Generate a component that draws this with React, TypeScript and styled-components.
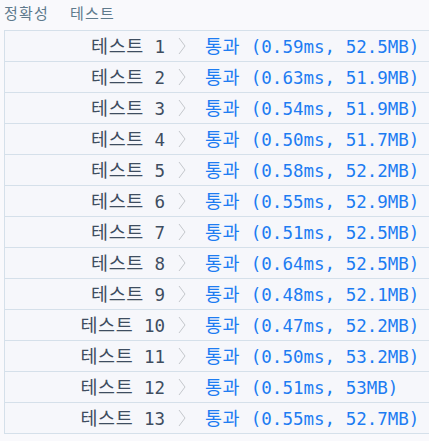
import styled, { createGlobalStyle } from 'styled-components';

const results = [
  { time: '0.59ms', mem: '52.5MB' },
  { time: '0.63ms', mem: '51.9MB' },
  { time: '0.54ms', mem: '51.9MB' },
  { time: '0.50ms', mem: '51.7MB' },
  { time: '0.58ms', mem: '52.2MB' },
  { time: '0.55ms', mem: '52.9MB' },
  { time: '0.51ms', mem: '52.5MB' },
  { time: '0.64ms', mem: '52.5MB' },
  { time: '0.48ms', mem: '52.1MB' },
  { time: '0.47ms', mem: '52.2MB' },
  { time: '0.50ms', mem: '53.2MB' },
  { time: '0.51ms', mem: '53MB' },
  { time: '0.55ms', mem: '52.7MB' },
];

export default function App() {
  return (
    <>
      <GlobalStyle />
      <Page>
        <Heading>
          <span>정확성</span>
          <span>테스트</span>
        </Heading>
        <Table>
          {results.map((r, i) => (
            <Row key={i}>
              <Label>
                <Hangul>테스트</Hangul> {i + 1}
              </Label>
              <Chevron width="8" height="18" viewBox="0 0 8 18">
                <polyline points="1,1 7,9 1,17" fill="none" stroke="#c4c7cc" strokeWidth="1" />
              </Chevron>
              <Result>
                <Hangul>통과</Hangul> ({r.time}, {r.mem})
              </Result>
            </Row>
          ))}
        </Table>
      </Page>
    </>
  );
}

const GlobalStyle = createGlobalStyle`
  body {
    margin: 0;
    background: #f9f9fc;
    font-family: "DejaVu Sans Mono", "Noto Sans CJK KR", monospace;
  }
`;

const Page = styled.div`
  width: 429px;
  height: 441px;
  overflow: hidden;
`;

const Heading = styled.div`
  display: flex;
  gap: 21px;
  height: 30px;
  padding-left: 4px;
  font-family: "Noto Sans CJK KR", sans-serif;
  font-size: 15px;
  letter-spacing: 1.2px;
  line-height: 26px;
  color: #5e7a8c;
`;

const Table = styled.div`
  margin-left: 4px;
  width: 440px;
  border: 1px solid #d5e0ea;
  border-bottom: none;
  background: #f6f7fb;
`;

const Row = styled.div`
  display: flex;
  align-items: center;
  height: 30px;
  border-bottom: 1px solid #d5e0ea;
  font-size: 17.5px;
  line-height: 30px;
`;

const Hangul = styled.span`
  font-family: "Noto Sans CJK KR", sans-serif;
  font-size: 18.5px;
  letter-spacing: 0.6px;
`;

const Label = styled.div`
  width: 160px;
  text-align: right;
  color: #3e4d60;
  white-space: pre;
`;

const Chevron = styled.svg`
  margin-left: 13px;
  flex: none;
`;

const Result = styled.div`
  margin-left: 19px;
  color: #1d7cf2;
  white-space: pre;
`;
